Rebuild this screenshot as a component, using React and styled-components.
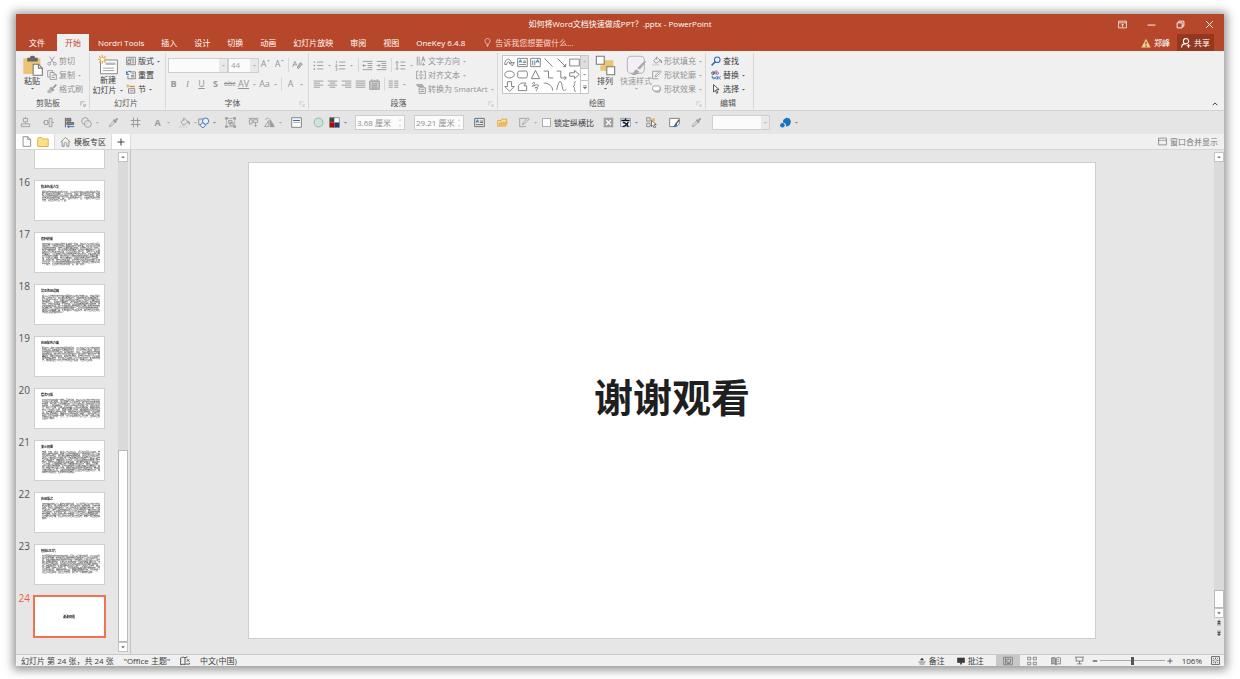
import React from "react";
import styled, { createGlobalStyle, css } from "styled-components";

const GlobalStyle = createGlobalStyle`
  * {
    box-sizing: border-box;
  }

  body {
    margin: 0;
    background-color: #fff;
    font-family: "Open Sans", "Noto Sans CJK SC", sans-serif;
    font-size: 8px;
    line-height: 12px;
    color: #3c3c3c;
  }

  button,
  input,
  select {
    font: inherit;
    color: inherit;
    margin: 0;
    padding: 0;
    border: 0;
    background: none;
  }
`;

const Page = styled.div`
  height: 100vh;
  padding: 14px 16px 13px;
`;

const Window = styled.div`
  height: 100%;
  display: flex;
  flex-direction: column;
  background-color: #e6e6e6;
  box-shadow: 0 1px 9px 3px rgba(0, 0, 0, 0.42);
`;

/* ---------- icons ---------- */

const Svg = styled.svg`
  display: block;
  flex: none;
  width: ${({ $size }) => $size}px;
  height: ${({ $size }) => $size}px;
  fill: none;
  stroke: currentColor;
  stroke-width: 1.3;
`;

const shapes = {
  caret: <path d="M3 6h10l-5 5z" fill="currentColor" stroke="none" opacity=".8" />,
  caretUp: <path d="M3 10h10l-5-5z" fill="currentColor" stroke="none" opacity=".8" />,
  more: <path d="M3 4h10M3 8h10l-5 5z" fill="currentColor" />,
  chevron: <path d="M2 11l6-6 6 6" strokeWidth="2.6" />,
  paste: (
    <>
      <path d="M1 2.500h13v12H1z" fill="#edc476" stroke="none" />
      <path d="M4 2h2c0-2 4-2 4 0h2v3H4z" fill="#666" stroke="none" />
      <path d="M8.500 7h4l3 3v5.500h-7z" fill="#fff" stroke="#777" strokeWidth=".8" />
      <path d="M12.500 7v3h3" stroke="#777" strokeWidth=".8" />
    </>
  ),
  cut: (
    <>
      <path d="M4 1l7 10M12 1L5 11" />
      <circle cx="3.500" cy="12.500" r="2.300" />
      <circle cx="12.500" cy="12.500" r="2.300" />
    </>
  ),
  copy: (
    <>
      <path d="M9 4V1H1v10h4" />
      <path d="M5 4h6l4 4v7H5zM11 4v4h4M7.500 9h3M7.500 12h5" />
    </>
  ),
  brush: (
    <>
      <path d="M15 1l-6 6" strokeWidth="2.400" />
      <path d="M6 5l5 5-2 1-4-4z" fill="currentColor" />
      <path d="M5 7l4 4-4 4-4-1-1-3z" fill="#bbb" stroke="none" />
    </>
  ),
  newSlide: (
    <>
      <path d="M2 4h13.500v11H2z" fill="#fff" stroke="#888" strokeWidth=".8" />
      <path d="M6 6h8v2H6z" fill="#bbb" stroke="none" />
      <path d="M4 10.500h9M4 12.500h9" stroke="#999" strokeWidth=".7" />
      <path d="M3.500 0v7M0 3.500h7M1 1l5 5M6 1L1 6" stroke="#eab04f" strokeWidth="1" />
      <circle cx="3.500" cy="3.500" r="1.300" fill="#fff" stroke="none" />
    </>
  ),
  layout: <path d="M1 2h14v12H1zM3 5h10M3 7h4v5H3zM9 8h4M9 11h4" stroke="#777" />,
  reset: (
    <>
      <path d="M6 3h9v11H3V9M9 6h4M8 9h5M8 11h5" stroke="#777" />
      <path d="M1 2v5h4M1 6c1-4 5-5 7-3" stroke="#2f6cb3" strokeWidth="1.600" />
    </>
  ),
  section: (
    <>
      <path d="M3 0v6M0 3h6" stroke="#e8a33d" />
      <path d="M6 4h8" stroke="#d98324" strokeWidth="2" />
      <path d="M4 7.500h10v7H4zM6 11h6" stroke="#777" />
    </>
  ),
  eraser: (
    <>
      <path d="M8 10l4-6 3 2-5 6H8z" fill="#bbb" />
      <path d="M1 10l3-8 3 6M2 7h4" />
    </>
  ),
  bullets: (
    <>
      <path d="M1 3h2M1 8h2M1 13h2" strokeWidth="2" />
      <path d="M6 3h9M6 8h9M6 13h9" />
    </>
  ),
  numbers: (
    <>
      <path d="M2 1v4M1 7h2v2H1v1h2M1 12h2v3H1" strokeWidth="1" />
      <path d="M6 3h9M6 8h9M6 13h9" />
    </>
  ),
  outdent: <path d="M1 2h14M8 5h7M8 8h7M8 11h7M1 14h14M6 8H1m2-2L1 8l2 2" />,
  indent: <path d="M1 2h14M8 5h7M8 8h7M8 11h7M1 14h14M1 8h5M4 6l2 2-2 2" />,
  spacing: <path d="M3 2v12M1 4l2-2 2 2M1 12l2 2 2-2M8 3h7M8 8h7M8 13h7" />,
  left: <path d="M1 3h14M1 6h9M1 9h14M1 12h9" />,
  center: <path d="M1 3h14M4 6h8M1 9h14M4 12h8" />,
  right: <path d="M1 3h14M6 6h9M1 9h14M6 12h9" />,
  justify: <path d="M1 3h14M1 6h14M1 9h14M1 12h14" />,
  distribute: (
    <>
      <path d="M1 3h14v12H1z" fill="#ccc" />
      <path d="M4 0v4M12 0v4M8 1v3M4 7h8M4 10h8M4 13h8" />
    </>
  ),
  columns: <path d="M1 3h6M9 3h6M1 6h6M9 6h6M1 9h6M9 9h6M1 12h6M9 12h6" />,
  textDir: <path d="M2 1v14M5 1v14M8 10v5M9 9l2.500-8L14 9M10 6h4M12 11v4M10 13l2 2 2-2" />,
  alignText: <path d="M4 2H1v12h3M12 2h3v12h-3M4 8h8M8 1v5M6 4l2-2 2 2M8 15v-5M6 12l2 2 2-2" />,
  smartArt: (
    <>
      <path d="M1 1h9l2 3H3z" fill="#bbb" />
      <path d="M5 6h10v9H5zM7 9h6M7 12h6" fill="#f3edf3" />
    </>
  ),
  curveArrow: <path d="M1 11c0-9 8-11 10-2M1 11h3c0-5 4-5 5-1M8 9l4 4 3-5z" />,
  textBox: (
    <>
      <path d="M1 2h14v12H1zM9 6h4M9 8h4M3 11h10" />
      <path d="M3 8l2-4 2 4M4 7h2" stroke="#2f6cb3" />
    </>
  ),
  vTextBox: (
    <>
      <path d="M1 2h14v12H1zM4 5v7M7 5v7" />
      <path d="M9 8l2-4 2 4M10 7h2" stroke="#2f6cb3" />
    </>
  ),
  line: <path d="M2 2l12 12" />,
  lineArrow: <path d="M2 2l12 12M14 10v4h-4" />,
  rect: <path d="M1 3h14v10H1z" />,
  ellipse: <ellipse cx="8" cy="8" rx="7" ry="5" />,
  roundRect: <rect x="1" y="3" width="14" height="10" rx="2.500" />,
  triangle: <path d="M8 2l6 12H2z" />,
  elbow: <path d="M1 3h7v10h7" />,
  elbowArrow: <path d="M1 3h6v10h8M12 10l3 3-3 3" />,
  arrowRight: <path d="M1 5.500h7V2l7 6-7 6v-3.500H1z" />,
  arrowDown: <path d="M5 1h6v7h4l-7 7-7-7h4z" />,
  freeform: <path d="M2 14V7l4-4h7l-3 4h4v7z" />,
  scribble: <path d="M3 4c4-5 5 0 1 3s5-3 8-1-5 5-5 4 5-1 4 1-3 2-1 4" />,
  arc: <path d="M1 3c8 0 13 5 13 11" />,
  curve: <path d="M1 13C5-6 8 0 9 8s3 6 6 4" />,
  brace: <path d="M10 1c-3 0-2 2-2 4s-1 3-2 3c1 0 2 1 2 3s-1 4 2 4" />,
  arrange: (
    <>
      <path d="M6 4h8v8H6z" fill="#edc476" stroke="none" />
      <path d="M4 8h7v4H4z" fill="#edc476" stroke="none" />
      <path d="M1 1h6v6H1zM9 9h6v6H9z" fill="#fff" stroke="#777" strokeWidth=".8" />
    </>
  ),
  quickStyle: (
    <>
      <rect x="1" y="1" width="13" height="13" rx="3" fill="#f4eef5" stroke="#b8b4ba" strokeWidth=".8" />
      <path d="M15.500 5l-5 6-2-1 5-5zM8 11l2 1.500c-1 3-4 3-6 2.500 2-.5 2-4 4-4z" fill="#aaa" stroke="none" />
    </>
  ),
  fill: (
    <>
      <path d="M3 7l5-5 5 5-5 4H5zM7 1v5" />
      <path d="M12 6l3 2v3" strokeWidth="2" />
      <path d="M0 14h12" stroke="#d8d8d8" strokeWidth="3" />
    </>
  ),
  outline: <path d="M11 2H1v12h9M5 11l1-3 7-7 2 2-7 7z" />,
  effects: (
    <>
      <path d="M3 11l3 3h6l3-5-2-5z" fill="#bbb" stroke="none" />
      <rect x="1" y="3" width="12" height="8" rx="3" fill="#fff" />
    </>
  ),
  find: (
    <>
      <circle cx="10" cy="6" r="4.500" stroke="#2f6cb3" strokeWidth="1.700" />
      <path d="M7 9l-6 6" stroke="#2f6cb3" strokeWidth="2.400" />
    </>
  ),
  replace: (
    <>
      <circle cx="3" cy="5" r="2" />
      <path d="M5 2v5" />
      <path d="M8 0v7" stroke="#8a4fa3" />
      <circle cx="10" cy="5" r="2" stroke="#8a4fa3" />
      <path d="M2 9v4h4M4 11l2 2-2 2" stroke="#2f6cb3" />
      <circle cx="9" cy="12.500" r="1.800" stroke="#2f6cb3" />
      <path d="M11 10v5M15.500 10.500c-3-1-3 5 0 4" stroke="#2f6cb3" />
    </>
  ),
  select: <path d="M4 1v12l3-3 2 5 2-1-2-5h4z" />,
  launcher: <path d="M2 12V2h10M7 7l6 6M14 8v6H8" />,
  alignCenter: <path d="M5 2h6v5H5zM2 10h12v4H2zM8 0v2M8 7v3" />,
  alignMiddle: <path d="M2 5h5v6H2zM9 2h4v12H9zM0 8h2M7 8h2M13 8h3" />,
  alignLeft: (
    <>
      <path d="M2 1v14" stroke="#555" />
      <path d="M4 2h6v4H4zM4 8h10v3H4z" fill="#888" stroke="#666" />
      <path d="M15 14H5m3-2l-3 2 3 2" stroke="#2f6cb3" />
    </>
  ),
  merge: (
    <>
      <circle cx="6" cy="6" r="5" />
      <circle cx="10" cy="10" r="5" fill="#f1dfe7" fillOpacity=".6" />
    </>
  ),
  dropper: (
    <>
      <path d="M2 14l1-3 6-6 2 2-6 6z" />
      <path d="M8 4l4 4M10 6l4-4" strokeWidth="2.600" />
    </>
  ),
  crop: <path d="M5 1v14M11 1v14M1 5h14M1 11h14" strokeWidth="1.500" />,
  shapesBlue: (
    <>
      <path d="M1 3h8v8H1z" stroke="#888" />
      <circle cx="11" cy="6" r="4.500" stroke="#2f6cb3" fill="#eaf1f8" />
      <path d="M7 8l4 4-4 4-4-4z" stroke="#2f6cb3" fill="#eaf1f8" />
    </>
  ),
  group: (
    <>
      <path d="M2 2h12v12H2z" strokeDasharray="2 1" />
      <path d="M5 5h5v4H5zM7 8h5v4H7z" fill="#ddd" />
      <path d="M0 2h4M12 2h4M0 14h4M12 14h4" strokeWidth="3" />
    </>
  ),
  backward: <path d="M1 2h14M2 4h4v6H2zM8 4h6v4H8zM11 8v6M9 12l2 2 2-2" />,
  rotate: (
    <>
      <path d="M7 14H1L7 5zM2 4c1-3 4-3 6-1" />
      <path d="M9 14V4l6 10z" fill="#999" />
    </>
  ),
  panel: (
    <>
      <path d="M1 1h14v14H1z" stroke="#777" fill="#fff" />
      <path d="M3 5h10" stroke="#2f6cb3" strokeWidth="1.600" />
      <path d="M3 8h10" stroke="#aaa" />
    </>
  ),
  circle: <circle cx="8" cy="8" r="6.500" fill="#cfe3d8" stroke="#87b49d" />,
  palette: (
    <>
      <path d="M1 1h7v7H1z" fill="#444" stroke="none" />
      <path d="M8 1h7v7H8z" fill="#fff" stroke="none" />
      <path d="M1 8h7v7H1z" fill="#c00000" stroke="none" />
      <path d="M8 8h7v7H8z" fill="#1f3f7a" stroke="none" />
      <path d="M1 1h14v14H1z" stroke="#555" strokeWidth=".8" />
    </>
  ),
  open: (
    <>
      <path d="M1 14V5h5l1-2h7v4" fill="#f7dfae" stroke="#dba544" />
      <path d="M1 14l3-7h12l-3 7z" fill="#edb95c" stroke="none" />
    </>
  ),
  close: (
    <>
      <path d="M1 1h14v14H1z" fill="#a0a0a0" stroke="none" />
      <path d="M4.500 4.500l7 7M11.500 4.500l-7 7" stroke="#fff" strokeWidth="2" />
    </>
  ),
  textFit: (
    <>
      <path d="M1 2h14v12H1z" fill="#fff" stroke="#4f7fb8" strokeWidth="1" />
      <path d="M2 5h12M8 2v3M4 8c3 0 6 2 8 6M12 7c-1 4-5 6-8 7" stroke="#111" strokeWidth="2" />
    </>
  ),
  selectMulti: (
    <>
      <path d="M1 1h5v5H1zM1 9h5v5H1z" stroke="#888" />
      <path d="M8 2h5v4H8z" fill="#edb95c" stroke="none" />
      <path d="M8 5v9l2-2 2 4 2-1-2-4h3z" fill="#fff" stroke="#666" />
    </>
  ),
  formatShape: (
    <>
      <path d="M1 2h14v8l-4 4H1z" fill="#fff" stroke="#777" />
      <path d="M15 4l-5 6" stroke="#555" strokeWidth="2" />
      <path d="M10 9l2 2c-1 4-4 4-6 3 2-1 2-4 4-5z" fill="#2f6cb3" stroke="none" />
    </>
  ),
  orb: (
    <>
      <path d="M5 4l4-3 5 1 2 5-2 5-5 2c0-4-2-6-5-6z" fill="#1673c0" stroke="none" />
      <circle cx="3.500" cy="12" r="3.300" fill="#1673c0" stroke="none" />
    </>
  ),
  doc: <path d="M3 1h7l4 4v10H3zM10 1v4h4" stroke="#888" />,
  folder: <path d="M1 4l1-2h4l2 2h7v10H1z" fill="#fde08a" stroke="#e0b445" />,
  home: <path d="M1 9l7-7 7 7M3 7.500V15h3v-4c0-2 4-2 4 0v4h3V7.500" stroke="#888" />,
  plus: <path d="M8 1v14M1 8h14" strokeWidth="2" />,
  minus: <path d="M2 8h12" strokeWidth="3" />,
  merged: <path d="M1 2h14v12H1zM1 6h4M6 6h4M11 6h4" />,
  bulb: <path d="M6 11c0-2-2.500-3-2.500-6C3.500-.5 12.500-.5 12.500 5c0 3-2.500 4-2.500 6zM6 13h4M7 15h2" />,
  ribbonOpts: <path d="M1 2h14v12H1zM1 5h14M8 13V7M5.500 9.500L8 7l2.500 2.500" />,
  minimize: <path d="M1 9h14" strokeWidth="1.600" />,
  restore: <path d="M2 5h9v9H2zM5 5V2h9v9h-3" strokeWidth="1.600" />,
  quit: <path d="M2 2l12 12M14 2L2 14" strokeWidth="1.600" />,
  warning: (
    <>
      <path d="M8 1l7.500 14H.5z" fill="#f3cf83" stroke="none" />
      <path d="M8 6v4M8 12v2" stroke="#444" strokeWidth="1.800" />
    </>
  ),
  person: (
    <>
      <circle cx="8" cy="5" r="4.200" strokeWidth="1.700" />
      <path d="M1 15c0-4 3-6 7-6M9 12.500h6M12 9.500v6" strokeWidth="1.700" />
    </>
  ),
  book: <path d="M8 3C6 1 3 2 1 3v11c3-1 5-1 7 0V3c1-1 2-1.500 4-1.500M11 5l4 4M15 5l-4 4M9 13h6v-2" />,
  notes: (
    <>
      <path d="M8 2l3 4H5z" fill="currentColor" />
      <path d="M1 10h14M3 14h10" />
    </>
  ),
  comment: <path d="M1 2h14v9h-5l-2 4-2-4H1z" fill="currentColor" />,
  normalView: <path d="M1 2h14v12H1zM4 2v12M6 5h6v5H6zM6 12h6" />,
  sorter: <path d="M1 2h5v4H1zM10 2h5v4h-5zM1 10h5v4H1zM10 10h5v4h-5z" />,
  reading: (
    <>
      <path d="M8 4C6 2 3 2 1 3v10c2-1 5-1 7 1z" fill="#aaa" />
      <path d="M8 4c2-2 5-2 7-1v10c-2-1-5-1-7 1zM10 6h3M10 9h3" />
    </>
  ),
  show: <path d="M0 2h16M2 2v7h12V2M8 9v5M4 14h8" strokeWidth="1.600" />,
  fit: <path d="M1 1h14v14H1zM8 3v3M8 10v3M3 8h3M10 8h3M4 4l2 2M12 4l-2 2M4 12l2-2M12 12l-2-2" />,
  prev: <path d="M8 1l4 4H4zM8 6l4 4H4zM3 13h10" fill="currentColor" />,
  next: <path d="M3 3h10M4 6h8l-4 4zM4 11h8l-4 4z" fill="currentColor" />,
};

const Icon = ({ name, size = 11 }) => (
  <Svg viewBox="0 0 16 16" $size={size} aria-hidden="true">
    {shapes[name]}
  </Svg>
);

/* ---------- title bar ---------- */

const Header = styled.header`
  flex: none;
  background-color: #b7472a;
  color: #fff;
`;

const TitleRow = styled.div`
  display: grid;
  grid-template-columns: 1fr auto 1fr;
  align-items: center;
  height: 20px;
`;

const Title = styled.h1`
  grid-column: 2;
  margin: 0;
  font-size: 8px;
  font-weight: normal;
`;

const WindowButtons = styled.div`
  display: flex;
  justify-content: flex-end;
  gap: 20px;
  padding-right: 10px;
`;

const PlainButton = styled.button`
  display: flex;
  align-items: center;
  justify-content: center;
  gap: 3px;
  white-space: nowrap;
`;

const TabRow = styled.nav`
  display: flex;
  gap: 1px;
  height: 17px;
  padding-left: 2px;
`;

const Tab = styled.button`
  padding: 0 ${({ $file }) => ($file ? 11 : 8)}px;
  line-height: 15px;
  white-space: nowrap;
  ${({ $active }) =>
    $active &&
    css`
      background-color: #f0f0f0;
      color: #c8472a;
    `}
`;

const TellMe = styled(PlainButton)`
  margin-left: 9px;
  color: #f6d9d0;
`;

const Account = styled.div`
  display: flex;
  gap: 7px;
  margin-left: auto;
  padding-right: 10px;
`;

const ShareButton = styled(PlainButton)`
  padding: 0 4px;
  background-color: #93381f;
`;

/* ---------- ribbon ---------- */

const Ribbon = styled.section`
  flex: none;
  display: flex;
  height: 60px;
  padding: 2px 0 1px;
  background-color: #f0f0f0;
  border-bottom: 1px solid #d2d2d2;
`;

const Group = styled.section`
  flex: none;
  display: flex;
  flex-direction: column;
  width: ${({ $width }) => $width}px;
  border-right: 1px solid #d8d8d8;
`;

const GroupBody = styled.div`
  flex: none;
  display: flex;
  gap: ${({ $gap = 0 }) => $gap}px;
  height: 44px;
  padding-left: ${({ $inset = 3 }) => $inset}px;
`;

const GroupFooter = styled.footer`
  display: flex;
  align-items: center;
  height: 12px;
  padding-right: 3px;
  color: #555;

  & > button {
    margin-top: 2px;
    color: ${({ $off }) => ($off ? "#b5b5b5" : "#777")};
  }
`;

const GroupLabel = styled.span`
  flex: 1;
  text-align: center;
`;

const BigButton = styled.button`
  display: flex;
  flex-direction: column;
  align-items: center;
  width: 30px;
  padding-top: 2px;
  line-height: 10px;
  white-space: nowrap;
  color: ${({ $off }) => ($off ? "#999" : "inherit")};
`;

const BigLabel = styled.span`
  display: flex;
  align-items: center;
  gap: 2px;
`;

const Rows = styled.div`
  display: flex;
  flex-direction: column;
  padding-top: 1px;
`;

const RowButton = styled.button`
  display: flex;
  align-items: center;
  gap: 2px;
  height: 14px;
  white-space: nowrap;
  color: ${({ $off }) => ($off ? "#929292" : "inherit")};
`;

const ToolRows = styled.div`
  display: flex;
  flex-direction: column;
  gap: 5px;
  padding-top: 5px;
  color: #969696;
`;

const ToolRow = styled.div`
  display: flex;
  align-items: center;
  height: 14px;
`;

const Tool = styled.button`
  display: flex;
  align-items: center;
  justify-content: flex-start;
  gap: 3px;
  width: ${({ $width = 14 }) => $width}px;
  height: 14px;
  text-align: left;
  white-space: nowrap;
`;

const Glyph = styled.span`
  display: inline-block;
  min-width: 11px;
  text-align: center;
  font-size: 9px;
  ${({ $kind }) => $kind === "bold" && "font-weight: bold;"}
  ${({ $kind }) => $kind === "italic" && "font-style: italic; font-family: 'Liberation Serif', serif;"}
  ${({ $kind }) => $kind === "underline" && "text-decoration: underline;"}
  ${({ $kind }) => $kind === "strike" && "text-decoration: line-through; font-size: 7px;"}
`;

const SizeTool = styled(Tool)`
  align-items: flex-start;
  justify-content: center;
  gap: 0;
  font-size: 9px;
`;

const Divider = styled.span`
  width: 1px;
  height: 14px;
  margin: 0 3px 0 1px;
  background-color: #d8d8d8;
`;

const SelectBox = styled.span`
  position: relative;
  display: flex;
  width: ${({ $width }) => $width}px;
  height: 15px;
  border: 1px solid #cfcfcf;
  background: linear-gradient(to left, #e9e9e9 8px, #fbfbfb 8px);
  color: #a0a0a0;

  & > select {
    flex: 1;
    appearance: none;
    padding-left: 2px;
    outline: 0;
  }

  & > svg {
    position: absolute;
    right: 1px;
    top: 4px;
    pointer-events: none;
  }
`;

const Gallery = styled.div`
  display: flex;
  height: 39px;
  margin-top: 2px;
  border: 1px solid #c6c6c6;
  background-color: #fff;
  color: #777;
`;

const ShapeGrid = styled.div`
  display: grid;
  grid-template-columns: repeat(6, 12px);
  column-gap: 1px;
  align-items: center;
  justify-items: center;
`;

const GalleryNav = styled.div`
  display: flex;
  flex-direction: column;
  width: 8px;
  border-left: 1px solid #c6c6c6;

  & > button {
    flex: 1;
    display: flex;
    align-items: center;
    justify-content: center;
  }

  & > button:first-child {
    background-color: #dedede;
    color: #aaa;
  }

  & > button + button {
    border-top: 1px solid #c6c6c6;
  }
`;

const Collapse = styled(PlainButton)`
  align-self: flex-end;
  margin-left: auto;
  padding: 0 6px 2px 0;
`;

/* ---------- quick toolbar ---------- */

const QuickBar = styled.section`
  flex: none;
  display: flex;
  align-items: center;
  height: 23px;
  padding-left: 4px;
  background-color: #e5e5e5;
`;

const Cell = styled.div`
  flex: none;
  display: flex;
  align-items: center;
  width: ${({ $width }) => $width}px;
  color: ${({ $on }) => ($on ? "#666" : "#9c9c9c")};
`;

const SpinBox = styled.span`
  display: flex;
  align-items: center;
  width: 50px;
  height: 15px;
  border: 1px solid #cdcdcd;
  background-color: #fbfbfb;
  color: #909090;

  & > input {
    flex: 1;
    min-width: 0;
    padding-left: 1px;
    outline: 0;
  }
`;

const Spinner = styled.span`
  display: flex;
  flex-direction: column;
  gap: 2px;
  padding-right: 2px;
  color: #aaa;
`;

const CheckLabel = styled.label`
  display: flex;
  align-items: center;
  gap: 3px;
  color: #3c3c3c;
  white-space: nowrap;

  & > input {
    appearance: none;
    width: 9px;
    height: 9px;
    border: 1px solid #b0b0b0;
    background-color: #fff;
  }
`;

/* ---------- document tabs ---------- */

const DocBar = styled.nav`
  flex: none;
  display: flex;
  align-items: center;
  height: 16px;
  background-color: #f0f0f0;
  border-bottom: 1px solid #d6d6d6;
`;

const DocPart = styled.div`
  display: flex;
  align-items: center;
  gap: 5px;
  height: 100%;
  padding: 0 5px;
  border-right: 1px solid #dcdcdc;
  background-color: ${({ $white }) => ($white ? "#fff" : "#f0f0f0")};
`;

const MergeButton = styled(PlainButton)`
  margin-left: auto;
  padding-right: 6px;
  color: #777;
`;

/* ---------- work area ---------- */

const Work = styled.main`
  flex: 1;
  display: flex;
  min-height: 0;
`;

const SlidePane = styled.aside`
  flex: none;
  display: flex;
  width: 115px;
  padding-right: 2px;
  border-right: 1px solid #c3c3c3;
`;

const SlideList = styled.ol`
  flex: 1;
  display: flex;
  flex-direction: column;
  justify-content: flex-end;
  gap: 11px;
  margin: 0;
  padding: 0 0 17px 1px;
  overflow: hidden;
  list-style: none;
`;

const SlideItem = styled.li`
  flex: none;
  display: flex;
  gap: 4px;
`;

const SlideNumber = styled.span`
  width: 13px;
  text-align: right;
  font-size: 10px;
  line-height: 4px;
  color: ${({ $active }) => ($active ? "#e8603c" : "#555")};
`;

const Thumb = styled.button`
  display: flex;
  flex-direction: column;
  justify-content: ${({ $active }) => ($active ? "center" : "flex-start")};
  align-items: ${({ $active }) => ($active ? "center" : "stretch")};
  width: 71px;
  height: 41px;
  padding: ${({ $active }) => ($active ? 0 : "4px 4px 0 6px")};
  text-align: left;
  background-color: #fff;
  border: 1px solid ${({ $active }) => ($active ? "#f07351" : "#cfcfcf")};
  ${({ $active }) => $active && "box-shadow: 0 0 0 1px #f07351;"}
`;

const ThumbTitle = styled.strong`
  font-size: 3px;
  line-height: 4px;
  color: #111;
  will-change: transform;
`;

const ThumbText = styled.span`
  margin-top: 3px;
  padding-left: 1px;
  font-size: 2px;
  line-height: 2px;
  color: #222;
  will-change: transform;
`;

const Scroll = styled.div`
  flex: none;
  display: flex;
  flex-direction: column;
  width: 10px;
  padding: 2px 0 ${({ $end = 2 }) => $end}px;
`;

const ScrollButton = styled(PlainButton)`
  flex: none;
  height: 10px;
  border: ${({ $bare }) => ($bare ? "0" : "1px solid #c3c3c3")};
  background-color: ${({ $bare }) => ($bare ? "transparent" : "#fff")};
`;

const ScrollTrack = styled.div`
  flex: 1;
  display: flex;
  flex-direction: column;
  justify-content: flex-end;
  background-color: #dadada;
`;

const ScrollThumb = styled.div`
  height: ${({ $share }) => $share}%;
  border: 1px solid #b9b9b9;
  background-color: #fff;
`;

const Canvas = styled.section`
  flex: 1;
  display: flex;
  align-items: flex-start;
  padding: 12px 118px 0 117px;
`;

const Slide = styled.article`
  flex: 1;
  display: flex;
  align-items: center;
  justify-content: center;
  aspect-ratio: 16 / 9;
  padding-bottom: 8px;
  background-color: #fff;
  border: 1px solid #cecece;
`;

const SlideTitle = styled.h2`
  margin: 0;
  font-size: 39px;
  line-height: 56px;
  font-weight: bold;
  color: #1f1f1f;
`;

/* ---------- status bar ---------- */

const StatusBar = styled.footer`
  flex: none;
  display: flex;
  align-items: center;
  height: 12px;
  padding: 0 4px 0 5px;
  background-color: #f0f0f0;
  border-top: 1px solid #c9c9c9;
`;

const StatusLeft = styled.div`
  display: flex;
  align-items: center;
  gap: 10px;
`;

const StatusRight = styled.div`
  display: flex;
  align-items: center;
  gap: 9px;
  height: 100%;
  margin-left: auto;
`;

const PaneToggles = styled.div`
  display: flex;
  gap: 12px;
  padding-right: 3px;
`;

const Views = styled.div`
  display: flex;
  height: 100%;
`;

const ViewButton = styled(PlainButton)`
  width: 24px;
  color: #777;
  background-color: ${({ $active }) => ($active ? "#c8c8c8" : "transparent")};
`;

const Zoom = styled.div`
  display: flex;
  align-items: center;
  gap: 2px;
`;

const ZoomSlider = styled.input`
  appearance: none;
  width: 65px;
  height: 9px;
  background: linear-gradient(#aaa, #aaa) center / 100% 1px no-repeat;

  &::-webkit-slider-thumb {
    appearance: none;
    width: 3px;
    height: 8px;
    background-color: #555;
  }
`;

const tabs = ["插入", "设计", "切换", "动画", "幻灯片放映", "审阅", "视图", "OneKey 6.4.8"];

const galleryShapes = [
  "curveArrow", "textBox", "vTextBox", "line", "lineArrow", "rect",
  "ellipse", "roundRect", "triangle", "elbow", "elbowArrow", "arrowRight",
  "arrowDown", "freeform", "scribble", "arc", "curve", "brace",
];

const slides = [
  { n: "", title: "", text: "" },
  {
    n: 16,
    title: "快速拆成方法",
    text: "要把文档内容快速变成幻灯片，可以先在大纲视图中设置好标题级别，再用发送命令导入。选择文件、选项、快速访问工具栏，找到发送到演示文稿的命令并添加。随后打开文档，点击该命令，系统会自动新建演示文稿，每个一级标题成为一页，二级标题成为正文内容，最后检查分页与层级。",
  },
  {
    n: 17,
    title: "套种模板",
    text: "演示文稿可以使用现成的模板来统一外观，在设计选项卡中选择合适的主题，点击即可应用。若要使用自己的模板，可以浏览主题并选择对应的文件，所有页面都会随之改变。主题包含颜色、字体、效果与背景样式，也可以分别进行调整。先选择一种颜色方案，再设置标题字体和正文字体，让页面风格保持一致。如果某一页需要单独设计，可以右键主题并选择应用于选定幻灯片。模板中的占位符位置由母版控制，修改母版后，所有使用该版式的页面都会更新，不必逐页调整，节省大量时间，同时保证排版整齐，画面协调，内容清楚，便于阅读和讲解，也方便后续继续修改内容。保存主题之后，可以在新的演示文稿中重复使用，团队成员也能共享同一套设计，保证对外材料的风格一致，减少返工。",
  },
  {
    n: 18,
    title: "常见的用误解",
    text: "很多人认为制作演示文稿只要把文字复制过去就可以，其实这样会使页面内容过多，观众难以抓住重点。正确的做法是提炼关键词，每页只讲一个观点，并配合合适的图片或图表。文字大小要保证后排也能看清，颜色对比要明显，避免使用过多的动画。标题应简短有力，正文分条说明，层次分明。页面留白能够突出主要信息，不必把空白处填满。同一份文稿中字体不宜超过三种，颜色也应控制在三种以内，这样整体会更加协调统一，阅读时也更加轻松自然。完成后从头播放一遍，检查错别字与动画顺序，确认无误之后再保存并发送给需要的同事。",
  },
  {
    n: 19,
    title: "应用配色方案",
    text: "配色方案决定了演示文稿的整体风格，可以在设计选项卡的变体中选择颜色。系统提供了多种内置方案，也可以自定义颜色，将企业标准色设置为主题颜色。设置完成后，图形、图表和文字会自动使用新的颜色，修改方案时也会同步变化。建议选择一种主色与一种辅助色，再配合黑白灰，既简洁又美观。对于重点内容，可以使用强调色加以突出，但不宜过多使用，以免分散注意力，影响整体效果。完成配色后可以保存为新的主题颜色，方便以后使用。",
  },
  {
    n: 20,
    title: "层次母版",
    text: "幻灯片母版用来统一控制页面的版式，在视图选项卡中点击幻灯片母版即可进入编辑。最上面的一页是总母版，对它的修改会影响所有版式，下面各页是不同的版式，可以分别设置。在母版中可以添加标志、页码和背景图，退出后这些元素不会被误选。占位符的大小、位置、字体、字号和颜色也都可以在母版里设定。需要新的版式时，点击插入版式，再插入所需占位符。编辑完成后关闭母版视图，在普通视图中套用版式，内容会自动适应新的布局。母版中的文字只起提示作用，放映时不会显示出来。日期、页脚与编号可以在插入选项卡中统一打开，也可以设置标题页不显示，应用到全部页面即可完成。",
  },
  {
    n: 21,
    title: "演示视图",
    text: "普通、大纲、浏览、备注页与阅读视图，适合在不同阶段使用。普通视图用于编辑单页内容，左侧显示缩略图，方便切换页面。大纲视图只显示文字，适合整理结构与调整顺序。浏览视图可以同时看到多页，拖动即可改变顺序，也能批量设置切换效果。备注页用于写下讲解要点，放映时观众看不到。阅读视图在窗口中播放，便于校对。演示者视图需要连接投影设备，讲者能看到备注、时间和下一页内容，让讲解更加从容，也能随时标注重点，放大页面局部，或者让屏幕暂时变黑。右下角的按钮可以快速切换这几种视图，按住上档键点击会进入母版。状态栏还提供显示比例的滑块，拖动即可放大或缩小页面，最右侧的按钮能让页面自动适应窗口大小，编辑细节时先放大，检查整体时再恢复。",
  },
  {
    n: 22,
    title: "应用版式",
    text: "演示文稿中的每一页都有对应的版式，可以在开始选项卡中点击版式进行更改。常见版式有标题、标题和内容、两栏内容、比较与空白等。选择合适的版式后，文字会自动进入相应的占位符中，不必手动对齐。如果页面内容被移动过，可以点击重置，恢复为默认的位置和格式，保持全文一致，让页面显得整齐规范，提高制作的效率与质量。新建页面时点击下方箭头，可以直接选择需要的版式，省去更改的步骤，多页同时选中后再点击版式，就能一次全部替换完成。",
  },
  {
    n: 23,
    title: "替换幻灯片",
    text: "有时需要把其他演示文稿中的页面插入到当前文稿里，可以使用重用幻灯片功能。在开始选项卡中点击新建幻灯片，选择重用幻灯片，在右侧窗格中浏览并打开文件，点击所需页面即可插入。如果要保留原来的外观，请勾选保留源格式，否则会使用当前主题。也可以直接复制粘贴，在粘贴选项中选择使用目标主题或保留源格式。替换完成后，检查字体与颜色是否统一，动画是否正常，链接是否有效。对于多余的页面，可以在左侧缩略图中选中并删除，也可以暂时隐藏，放映时不会出现，需要时再恢复显示，十分方便，适合多场合使用。最后保存文件，并另存一份备用的副本。",
  },
];

const Caret = () => <Icon name="caret" size={5} />;

const RibbonGroup = ({ label, width, inset, gap, off, launcher = true, children }) => (
  <Group $width={width} aria-label={label}>
    <GroupBody $inset={inset} $gap={gap}>
      {children}
    </GroupBody>
    <GroupFooter $off={off}>
      <GroupLabel>{label}</GroupLabel>
      {launcher && (
        <PlainButton aria-label={`${label}设置`}>
          <Icon name="launcher" size={6} />
        </PlainButton>
      )}
    </GroupFooter>
  </Group>
);

const Command = ({ icon, label, caret, off }) => (
  <RowButton $off={off}>
    <Icon name={icon} size={10} />
    {label}
    {caret && <Caret />}
  </RowButton>
);

const IconTool = ({ icon, width, caret, label }) => (
  <Tool $width={width} aria-label={label || icon}>
    <Icon name={icon} />
    {caret && <Caret />}
  </Tool>
);

const TextTool = ({ kind, width, caret, children }) => (
  <Tool $width={width}>
    <Glyph $kind={kind}>{children}</Glyph>
    {caret && <Caret />}
  </Tool>
);

const QuickTool = ({ icon, width, caret, on }) => (
  <Cell $width={width} $on={on}>
    <Tool $width={caret ? 20 : 12} aria-label={icon}>
      <Icon name={icon} />
      {caret && <Caret />}
    </Tool>
  </Cell>
);

const Spin = ({ label, value, width }) => (
  <Cell $width={width}>
    <SpinBox>
      <input aria-label={label} defaultValue={value} />
      <Spinner>
        <Icon name="caretUp" size={4} />
        <Icon name="caret" size={4} />
      </Spinner>
    </SpinBox>
  </Cell>
);

const TitleBar = () => (
  <Header>
    <TitleRow>
      <Title>如何将Word文档快速做成PPT？.pptx - PowerPoint</Title>
      <WindowButtons>
        <PlainButton aria-label="功能区显示选项"><Icon name="ribbonOpts" size={9} /></PlainButton>
        <PlainButton aria-label="最小化"><Icon name="minimize" size={9} /></PlainButton>
        <PlainButton aria-label="还原"><Icon name="restore" size={9} /></PlainButton>
        <PlainButton aria-label="关闭"><Icon name="quit" size={9} /></PlainButton>
      </WindowButtons>
    </TitleRow>
    <TabRow>
      <Tab $file>文件</Tab>
      <Tab $active>开始</Tab>
      <Tab>Nordri Tools</Tab>
      {tabs.map((name) => (
        <Tab key={name}>{name}</Tab>
      ))}
      <TellMe>
        <Icon name="bulb" size={9} />
        告诉我您想要做什么...
      </TellMe>
      <Account>
        <PlainButton><Icon name="warning" size={10} />郑峰</PlainButton>
        <ShareButton><Icon name="person" size={10} />共享</ShareButton>
      </Account>
    </TabRow>
  </Header>
);

const HomeRibbon = () => (
  <Ribbon>
    <RibbonGroup label="剪贴板" width={74} inset={1}>
      <BigButton>
        <Icon name="paste" size={21} />
        <BigLabel>粘贴</BigLabel>
        <Caret />
      </BigButton>
      <Rows>
        <Command icon="cut" label="剪切" off />
        <Command icon="copy" label="复制" caret off />
        <Command icon="brush" label="格式刷" off />
      </Rows>
    </RibbonGroup>

    <RibbonGroup label="幻灯片" width={76} launcher={false} gap={3}>
      <BigButton>
        <Icon name="newSlide" size={20} />
        <BigLabel>新建</BigLabel>
        <BigLabel>幻灯片<Caret /></BigLabel>
      </BigButton>
      <Rows>
        <Command icon="layout" label="版式" caret />
        <Command icon="reset" label="重置" />
        <Command icon="section" label="节" caret />
      </Rows>
    </RibbonGroup>

    <RibbonGroup label="字体" width={143} inset={2} off>
      <ToolRows>
        <ToolRow>
          <SelectBox $width={60}>
            <select aria-label="字体"><option> </option></select>
            <Caret />
          </SelectBox>
          <SelectBox $width={31}>
            <select aria-label="字号"><option>44</option></select>
            <Caret />
          </SelectBox>
          <SizeTool aria-label="增大字号">A<Icon name="caretUp" size={5} /></SizeTool>
          <SizeTool aria-label="减小字号">A<Icon name="caret" size={5} /></SizeTool>
          <Divider />
          <IconTool icon="eraser" label="清除格式" />
        </ToolRow>
        <ToolRow>
          <TextTool kind="bold">B</TextTool>
          <TextTool kind="italic">I</TextTool>
          <TextTool kind="underline">U</TextTool>
          <TextTool kind="bold">S</TextTool>
          <TextTool kind="strike">abc</TextTool>
          <TextTool kind="underline" width={21} caret>AV</TextTool>
          <TextTool width={21} caret>Aa</TextTool>
          <Divider />
          <TextTool width={18} caret>A</TextTool>
        </ToolRow>
      </ToolRows>
    </RibbonGroup>

    <RibbonGroup label="段落" width={189} inset={4} gap={1} off>
      <ToolRows>
        <ToolRow>
          <IconTool icon="bullets" width={22} caret />
          <IconTool icon="numbers" width={22} caret />
          <Divider />
          <IconTool icon="outdent" />
          <IconTool icon="indent" />
          <Divider />
          <IconTool icon="spacing" width={20} caret />
        </ToolRow>
        <ToolRow>
          <IconTool icon="left" />
          <IconTool icon="center" />
          <IconTool icon="right" />
          <IconTool icon="justify" />
          <IconTool icon="distribute" />
          <Divider />
          <IconTool icon="columns" width={20} caret />
        </ToolRow>
      </ToolRows>
      <Rows>
        <Command icon="textDir" label="文字方向" caret off />
        <Command icon="alignText" label="对齐文本" caret off />
        <Command icon="smartArt" label="转换为 SmartArt" caret off />
      </Rows>
    </RibbonGroup>

    <RibbonGroup label="绘图" width={208} inset={4} gap={1} off>
      <Gallery>
        <ShapeGrid>
          {galleryShapes.map((name) => (
            <PlainButton key={name} aria-label={name}>
              <Icon name={name} />
            </PlainButton>
          ))}
        </ShapeGrid>
        <GalleryNav>
          <button aria-label="上一行"><Icon name="caretUp" size={5} /></button>
          <button aria-label="下一行"><Caret /></button>
          <button aria-label="其他"><Icon name="more" size={6} /></button>
        </GalleryNav>
      </Gallery>
      <BigButton>
        <Icon name="arrange" size={21} />
        <BigLabel>排列</BigLabel>
        <Caret />
      </BigButton>
      <BigButton $off>
        <Icon name="quickStyle" size={21} />
        <BigLabel>快速样式</BigLabel>
        <Caret />
      </BigButton>
      <Rows>
        <Command icon="fill" label="形状填充" caret off />
        <Command icon="outline" label="形状轮廓" caret off />
        <Command icon="effects" label="形状效果" caret off />
      </Rows>
    </RibbonGroup>

    <RibbonGroup label="编辑" width={48} inset={5} launcher={false}>
      <Rows>
        <Command icon="find" label="查找" />
        <Command icon="replace" label="替换" caret />
        <Command icon="select" label="选择" caret />
      </Rows>
    </RibbonGroup>

    <Collapse aria-label="折叠功能区">
      <Icon name="chevron" size={6} />
    </Collapse>
  </Ribbon>
);

const QuickTools = () => (
  <QuickBar>
    <QuickTool icon="alignCenter" width={23} />
    <QuickTool icon="alignMiddle" width={21} />
    <QuickTool icon="alignLeft" width={17} on />
    <QuickTool icon="merge" width={27} caret />
    <QuickTool icon="dropper" width={22} />
    <QuickTool icon="crop" width={22} />
    <Cell $width={27}>
      <TextTool kind="bold" width={20} caret>A</TextTool>
    </Cell>
    <QuickTool icon="fill" width={19} caret />
    <QuickTool icon="shapesBlue" width={27} caret on />
    <QuickTool icon="group" width={23} />
    <QuickTool icon="backward" width={16} />
    <QuickTool icon="rotate" width={27} caret />
    <QuickTool icon="panel" width={22} on />
    <QuickTool icon="circle" width={16} />
    <QuickTool icon="palette" width={26} caret on />
    <Spin label="高度" value="3.68 厘米" width={59} />
    <Spin label="宽度" value="29.21 厘米" width={60} />
    <QuickTool icon="textBox" width={23} on />
    <QuickTool icon="open" width={22} />
    <QuickTool icon="outline" width={23} caret />
    <Cell $width={61}>
      <CheckLabel>
        <input type="checkbox" />
        锁定纵横比
      </CheckLabel>
    </Cell>
    <QuickTool icon="close" width={17} />
    <QuickTool icon="textFit" width={26} caret on />
    <QuickTool icon="selectMulti" width={23} on />
    <QuickTool icon="formatShape" width={22} on />
    <QuickTool icon="dropper" width={21} />
    <Cell $width={68}>
      <SelectBox $width={58}>
        <select aria-label="样式"><option> </option></select>
        <Caret />
      </SelectBox>
    </Cell>
    <QuickTool icon="orb" width={27} caret on />
  </QuickBar>
);

const Documents = () => (
  <DocBar>
    <DocPart $white>
      <PlainButton aria-label="新建"><Icon name="doc" /></PlainButton>
      <PlainButton aria-label="打开"><Icon name="folder" size={12} /></PlainButton>
    </DocPart>
    <DocPart>
      <PlainButton><Icon name="home" />模板专区</PlainButton>
    </DocPart>
    <DocPart $white>
      <PlainButton aria-label="添加"><Icon name="plus" size={8} /></PlainButton>
    </DocPart>
    <MergeButton><Icon name="merged" size={9} />窗口合并显示</MergeButton>
  </DocBar>
);

const Thumbnails = () => (
  <SlidePane>
    <SlideList>
      {slides.map(({ n, title, text }) => (
        <SlideItem key={title}>
          <SlideNumber>{n}</SlideNumber>
          <Thumb aria-label={`幻灯片 ${n}`}>
            <ThumbTitle>{title}</ThumbTitle>
            <ThumbText>{text}</ThumbText>
          </Thumb>
        </SlideItem>
      ))}
      <SlideItem>
        <SlideNumber $active>24</SlideNumber>
        <Thumb $active>
          <ThumbTitle>谢谢观看</ThumbTitle>
        </Thumb>
      </SlideItem>
    </SlideList>
    <Scroll>
      <ScrollButton aria-label="向上"><Icon name="caretUp" size={6} /></ScrollButton>
      <ScrollTrack><ScrollThumb $share={40} /></ScrollTrack>
      <ScrollButton aria-label="向下"><Icon name="caret" size={6} /></ScrollButton>
    </Scroll>
  </SlidePane>
);

const Status = () => (
  <StatusBar>
    <StatusLeft>
      <span>幻灯片 第 24 张，共 24 张</span>
      <span>"Office 主题"</span>
      <PlainButton aria-label="拼写检查"><Icon name="book" size={10} /></PlainButton>
      <span>中文(中国)</span>
    </StatusLeft>
    <StatusRight>
      <PaneToggles>
        <PlainButton><Icon name="notes" size={8} />备注</PlainButton>
        <PlainButton><Icon name="comment" size={8} />批注</PlainButton>
      </PaneToggles>
      <Views>
        <ViewButton $active aria-label="普通视图"><Icon name="normalView" size={10} /></ViewButton>
        <ViewButton aria-label="幻灯片浏览"><Icon name="sorter" size={10} /></ViewButton>
        <ViewButton aria-label="阅读视图"><Icon name="reading" size={10} /></ViewButton>
        <ViewButton aria-label="幻灯片放映"><Icon name="show" size={9} /></ViewButton>
        <Zoom>
          <PlainButton aria-label="缩小"><Icon name="minus" size={6} /></PlainButton>
          <ZoomSlider type="range" aria-label="缩放" min="0" max="100" defaultValue="50" />
          <PlainButton aria-label="放大"><Icon name="plus" size={6} /></PlainButton>
        </Zoom>
      </Views>
      <span>106%</span>
      <PlainButton aria-label="适应窗口"><Icon name="fit" size={9} /></PlainButton>
    </StatusRight>
  </StatusBar>
);

const App = () => (
  <>
    <GlobalStyle />
    <Page>
      <Window>
        <TitleBar />
        <HomeRibbon />
        <QuickTools />
        <Documents />
        <Work>
          <Thumbnails />
          <Canvas>
            <Slide>
              <SlideTitle>谢谢观看</SlideTitle>
            </Slide>
          </Canvas>
          <Scroll $end={16}>
            <ScrollButton aria-label="向上滚动"><Icon name="caretUp" size={6} /></ScrollButton>
            <ScrollTrack><ScrollThumb $share={4} /></ScrollTrack>
            <ScrollButton aria-label="向下滚动"><Icon name="caret" size={6} /></ScrollButton>
            <ScrollButton $bare aria-label="上一张幻灯片"><Icon name="prev" size={6} /></ScrollButton>
            <ScrollButton $bare aria-label="下一张幻灯片"><Icon name="next" size={6} /></ScrollButton>
          </Scroll>
        </Work>
        <Status />
      </Window>
    </Page>
  </>
);

export default App;
